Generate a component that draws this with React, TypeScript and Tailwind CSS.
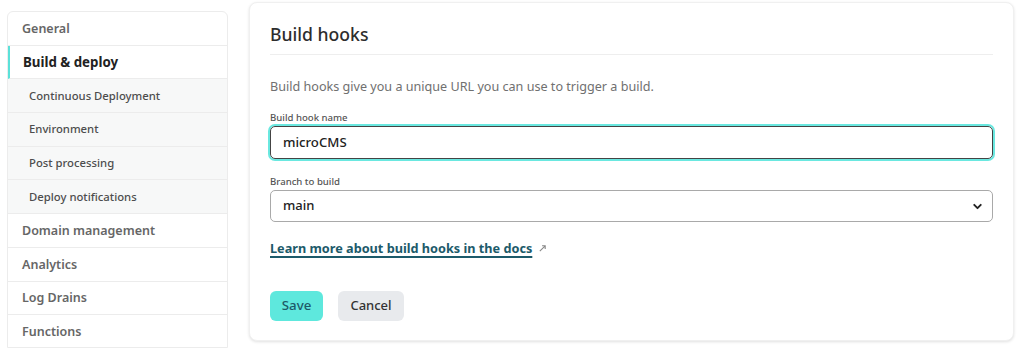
import { ChevronDown } from 'lucide-react'

const NAV = [
  { label: 'General', kind: 'top' },
  { label: 'Build & deploy', kind: 'active' },
  { label: 'Continuous Deployment', kind: 'sub' },
  { label: 'Environment', kind: 'sub' },
  { label: 'Post processing', kind: 'sub' },
  { label: 'Deploy notifications', kind: 'sub' },
  { label: 'Domain management', kind: 'top' },
  { label: 'Analytics', kind: 'top' },
  { label: 'Log Drains', kind: 'top' },
  { label: 'Functions', kind: 'top' },
]

function Sidebar() {
  return (
    <nav className="w-[221px] shrink-0 mt-[11px] rounded-t-md border border-[#ececec] bg-white overflow-hidden">
      {NAV.map(item => {
        if (item.kind === 'sub') {
          return (
            <div key={item.label} className="h-[33.7px] pt-px flex items-center pl-[21px] bg-[#f7f8f8] border-b border-[#ececec] text-[11.3px] font-medium text-[#4d4d4d]">
              {item.label}
            </div>
          )
        }
        if (item.kind === 'active') {
          return (
            <div key={item.label} className="h-[33.7px] pt-[2px] flex items-center pl-[13px] border-l-2 border-l-[#5be1d9] border-b border-b-[#ececec] text-[13.3px] font-bold text-[#222]">
              {item.label}
            </div>
          )
        }
        return (
          <div key={item.label} className="h-[33.7px] pt-[2px] flex items-center pl-[14px] border-b border-[#ececec] text-[12.5px] font-semibold text-[#666]">
            {item.label}
          </div>
        )
      })}
    </nav>
  )
}

export default function App() {
  return (
    <div className="w-[1024px] h-[348px] overflow-hidden bg-white flex gap-[21px] pl-[7px] font-['Noto_Sans',sans-serif]">
      <Sidebar />

      <section className="w-[765px] h-[339px] mt-[2px] rounded-lg bg-white border border-[#f0f0f0] shadow-[0_1px_3px_rgba(0,0,0,0.12)] px-[20px]">
        <h2 className="pt-[19px] pb-[8px] border-b border-[#eeeeee] text-[17.6px] font-medium text-[#2d2d2d] leading-[24px]">
          Build hooks
        </h2>

        <p className="mt-[22px] text-[12.6px] text-[#707070] leading-[20px]">
          Build hooks give you a unique URL you can use to trigger a build.
        </p>

        <label className="block mt-[14px] text-[9.6px] font-medium text-[#555] leading-[14px]">Build hook name</label>
        <div className="mt-[1px] h-[33px] rounded-[5px] border border-[#444] ring-2 ring-[#6ae8e0] flex items-center px-[12px] text-[13.2px] font-medium text-[#222]">
          microCMS
        </div>

        <label className="block mt-[16px] text-[9.6px] font-medium text-[#555] leading-[14px]">Branch to build</label>
        <div className="mt-[1px] h-[32px] rounded-[5px] border border-[#a9a9a9] flex items-center justify-between px-[12px] text-[13px] font-medium text-[#222]">
          <span>main</span>
          <ChevronDown size={13} strokeWidth={3.5} className="text-[#222] mr-[-4px]" />
        </div>

        <div className="mt-[16px] flex items-center gap-[6px] h-[20px]">
          <a className="text-[12.7px] font-bold text-[#1c5a6a] underline underline-offset-[3px] decoration-[1.5px] leading-[20px]">
            Learn more about build hooks in the docs
          </a>
          <svg width="9" height="9" viewBox="0 0 10 10" className="text-[#888]">
            <path d="M2 8 L8 2 M4.5 2 H8 V5.5" stroke="currentColor" strokeWidth="1.2" fill="none" />
          </svg>
        </div>

        <div className="mt-[33px] flex gap-[15px]">
          <button className="h-[30px] w-[53px] rounded-md bg-[#5ee8dd] text-[13.3px] font-medium text-[#1d5968]">Save</button>
          <button className="h-[30px] w-[66px] rounded-md bg-[#e8eaed] text-[13px] font-medium text-[#333]">Cancel</button>
        </div>
      </section>
    </div>
  )
}
